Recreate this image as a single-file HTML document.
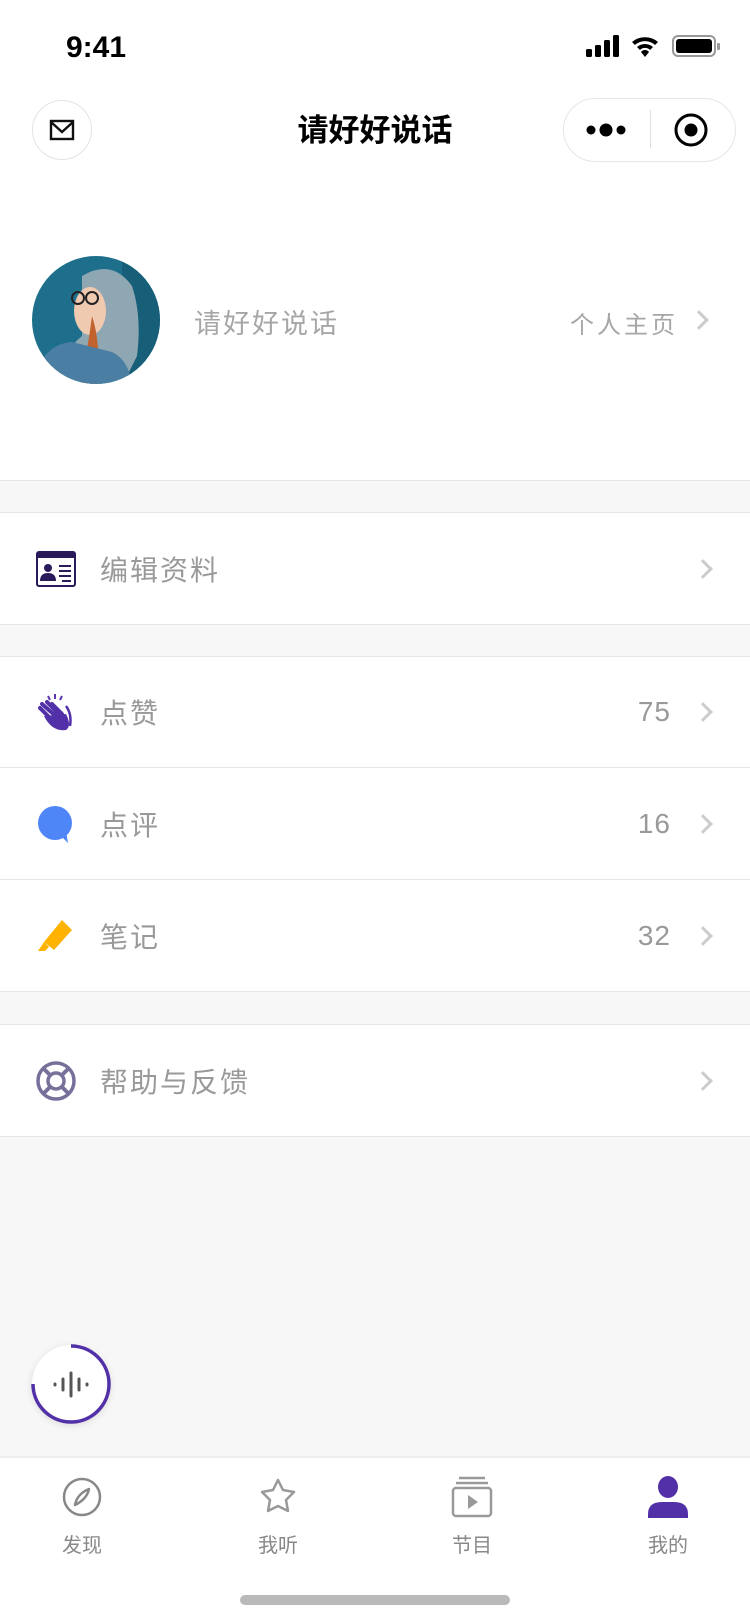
<!DOCTYPE html>
<html><head><meta charset="utf-8"><style>
*{margin:0;padding:0;box-sizing:border-box}
body{width:750px;height:1624px;background:#f7f7f7;font-family:"Liberation Sans","Noto Sans CJK SC",sans-serif;position:relative;overflow:hidden}
.abs{position:absolute}
.white{background:#fff;position:absolute;left:0;width:750px}
.row{position:absolute;left:0;width:750px;background:#fff;border-bottom:1px solid #e6e6e6}
.row .t{position:absolute;left:100px;top:50%;transform:translateY(-50%);font-size:28px;color:#999;letter-spacing:2px}
.row .n{position:absolute;right:79px;top:50%;transform:translateY(-50%);font-size:28px;color:#999;letter-spacing:1px}
.chev{position:absolute;right:40px;top:50%;width:14px;height:14px;border-right:3px solid #ccc;border-top:3px solid #ccc;transform:translateY(-50%) rotate(45deg)}
.ic{position:absolute;left:36px;top:50%;transform:translateY(-50%)}
.tab{position:absolute;top:1476px;width:120px;text-align:center}
.tab .l{font-size:20px;color:#888;margin-top:6px}
</style></head><body>
<div class="white" style="top:0;height:481px;border-bottom:1px solid #e6e6e6"></div>
<div class="abs" style="left:66px;top:31px;font-size:30px;font-weight:bold;color:#000">9:41</div>
<svg class="abs" style="left:586px;top:34px" width="136" height="26" viewBox="0 0 136 26">
<rect x="0" y="15" width="6" height="8" rx="1.5"/><rect x="9" y="11" width="6" height="12" rx="1.5"/><rect x="18" y="6" width="6" height="17" rx="1.5"/><rect x="27" y="1" width="6" height="22" rx="1.5"/>
<path d="M46 8a20 20 0 0 1 26 0l-3 3a15 15 0 0 0 -20 0z M51 13a12 12 0 0 1 16 0l-3 3a7 7 0 0 0 -10 0z M55 18a5 5 0 0 1 8 0l-4 5z"/>
<rect x="87" y="2" width="42" height="20" rx="5" fill="none" stroke="#999" stroke-width="2"/><rect x="90" y="5" width="36" height="14" rx="3"/><rect x="131" y="9" width="3" height="7" rx="1" fill="#999"/>
</svg>
<div class="abs" style="left:32px;top:100px;width:60px;height:60px;border:1.5px solid #e3e3e3;border-radius:50%"></div>
<svg class="abs" style="left:49px;top:119px" width="26" height="22" viewBox="0 0 26 22"><rect x="2" y="2" width="22" height="18" fill="none" stroke="#111" stroke-width="2.4"/><path d="M2 3l11 10 11-10" fill="none" stroke="#111" stroke-width="2.4"/></svg>
<div class="abs" style="left:0;width:750px;top:105px;text-align:center;font-size:31px;font-weight:bold;color:#000">请好好说话</div>
<div class="abs" style="left:563px;top:98px;width:173px;height:64px;border:1.5px solid #e6e6e6;border-radius:32px;background:#fff"></div>
<div class="abs" style="left:650px;top:110px;width:1px;height:38px;background:#ddd"></div>
<svg class="abs" style="left:586px;top:120px" width="44" height="20"><circle cx="5" cy="10" r="4.5"/><circle cx="20" cy="10" r="6.5"/><circle cx="35" cy="10" r="4.5"/></svg>
<svg class="abs" style="left:673px;top:112px" width="36" height="36"><circle cx="18" cy="18" r="15" fill="none" stroke="#000" stroke-width="3"/><circle cx="18" cy="18" r="6.5"/></svg>
<svg class="abs" style="left:32px;top:256px" width="128" height="128" viewBox="0 0 128 128">
<defs><clipPath id="c"><circle cx="64" cy="64" r="64"/></clipPath></defs>
<g clip-path="url(#c)"><rect width="128" height="128" fill="#1e6f8c"/><rect x="90" width="38" height="128" fill="#175f78"/>
<path d="M50 20q30-18 50 10q10 30 5 70l-20 40h-60q0-40 25-60z" fill="#8fa6b3"/>
<ellipse cx="58" cy="55" rx="16" ry="24" fill="#f0c9b1"/>
<path d="M60 60q10 30 5 80h-20q10-40 15-80z" fill="#c2622e"/>
<path d="M0 128q10-40 40-42l40 10q20 10 20 40z" fill="#4a7fa3"/>
<circle cx="46" cy="42" r="6" fill="none" stroke="#222" stroke-width="2"/><circle cx="60" cy="42" r="6" fill="none" stroke="#222" stroke-width="2"/></g></svg>
<div class="abs" style="left:194px;top:302px;font-size:27px;color:#a6a6a6;letter-spacing:2px">请好好说话</div>
<div class="abs" style="left:570px;top:305px;font-size:24px;color:#a6a6a6;letter-spacing:3px">个人主页</div>
<div class="chev" style="top:320px;right:44px"></div>

<div class="row" style="top:512px;height:113px;border-top:1px solid #e6e6e6">
<svg class="ic" width="40" height="36" viewBox="0 0 40 36"><rect x="1" y="1" width="38" height="34" rx="2" fill="#fff" stroke="#2a1a5a" stroke-width="2"/><rect x="1" y="1" width="38" height="6" fill="#2a1a5a"/><circle cx="12" cy="17" r="4" fill="#2a1a5a"/><path d="M4 30q0-8 8-8t8 8z" fill="#2a1a5a"/><path d="M23 15h12M23 20h12M23 25h12M26 30h9" stroke="#2a1a5a" stroke-width="2"/></svg>
<div class="t">编辑资料</div><div class="chev"></div></div>

<div class="row" style="top:656px;height:112px;border-top:1px solid #e6e6e6">
<svg class="ic" width="40" height="40" viewBox="0 0 40 40"><path d="M12 4l2 4M19 2v5M26 4l-2 4" stroke="#5a35b0" stroke-width="2"/><path d="M4 16l14 14M6 12l16 14M11 10l14 14M16 12l10 10" stroke="#5230a8" stroke-width="4" stroke-linecap="round"/><path d="M8 24q8 16 22 14q6-4 0-16z" fill="#5230a8"/><path d="M30 14q6 8 4 20" stroke="#5230a8" stroke-width="2.5" fill="none"/></svg>
<div class="t">点赞</div><div class="n">75</div><div class="chev"></div></div>
<div class="row" style="top:768px;height:112px">
<svg class="ic" width="38" height="38" viewBox="0 0 38 38"><circle cx="19" cy="18" r="17" fill="#4f86f7"/><path d="M24 30l8 8-2-12z" fill="#4f86f7"/></svg>
<div class="t">点评</div><div class="n">16</div><div class="chev"></div></div>
<div class="row" style="top:880px;height:112px">
<svg class="ic" width="38" height="38" viewBox="0 0 38 38"><path d="M26 3l10 10-18 20-10-8z" fill="#ffb300"/><path d="M8 25l5 5-4 4H2z" fill="#ffb300"/></svg>
<div class="t">笔记</div><div class="n">32</div><div class="chev"></div></div>

<div class="row" style="top:1024px;height:113px;border-top:1px solid #e6e6e6">
<svg class="ic" width="40" height="40" viewBox="0 0 40 40"><circle cx="20" cy="20" r="18" fill="none" stroke="#76709a" stroke-width="3.5"/><circle cx="20" cy="20" r="8" fill="none" stroke="#76709a" stroke-width="3.5"/><path d="M7 7l8 8M33 7l-8 8M7 33l8-8M33 33l-8-8" stroke="#76709a" stroke-width="4"/></svg>
<div class="t">帮助与反馈</div><div class="chev"></div></div>

<div class="abs" style="left:32px;top:1345px;width:78px;height:78px;border-radius:50%;background:#fff;box-shadow:0 2px 8px rgba(0,0,0,.12)"></div>
<svg class="abs" style="left:30px;top:1343px" width="82" height="82" viewBox="0 0 82 82"><path d="M41 3A38 38 0 1 1 3 41" fill="none" stroke="#5230a8" stroke-width="3.5"/><g stroke="#555" stroke-width="3" stroke-linecap="round"><path d="M25 41v1M33 36v11M41 30v23M49 36v11M57 41v1"/></g></svg>

<div class="white" style="top:1456px;height:168px;border-top:2px solid #eee"></div>
<div class="tab" style="left:22px"><svg width="42" height="42" viewBox="0 0 42 42"><circle cx="21" cy="21" r="18" fill="none" stroke="#888" stroke-width="2.5"/><path d="M28 13q-2 10-14 16q2-11 14-16z" fill="none" stroke="#888" stroke-width="2.5" stroke-linejoin="round"/></svg><div class="l">发现</div></div>
<div class="tab" style="left:218px"><svg width="42" height="42" viewBox="0 0 42 42"><path d="M21 4l5 10 11 2-8 8 2 11-10-5-10 5 2-11-8-8 11-2z" fill="none" stroke="#999" stroke-width="2.5" stroke-linejoin="round"/></svg><div class="l">我听</div></div>
<div class="tab" style="left:412px"><svg width="42" height="42" viewBox="0 0 42 42"><path d="M8 2h26M5 7h32" stroke="#999" stroke-width="2.5"/><rect x="2" y="12" width="38" height="28" rx="3" fill="none" stroke="#999" stroke-width="2.5"/><path d="M17 19v14l10-7z" fill="#999"/></svg><div class="l">节目</div></div>
<div class="tab" style="left:608px"><svg width="42" height="42" viewBox="0 0 42 42"><ellipse cx="21" cy="11" rx="10" ry="11" fill="#5230a8"/><path d="M1 38q0-12 14-12h12q14 0 14 12v4H1z" fill="#5230a8"/></svg><div class="l">我的</div></div>
<div class="abs" style="left:240px;top:1595px;width:270px;height:10px;border-radius:5px;background:#b9b9b9"></div>
</body></html>
